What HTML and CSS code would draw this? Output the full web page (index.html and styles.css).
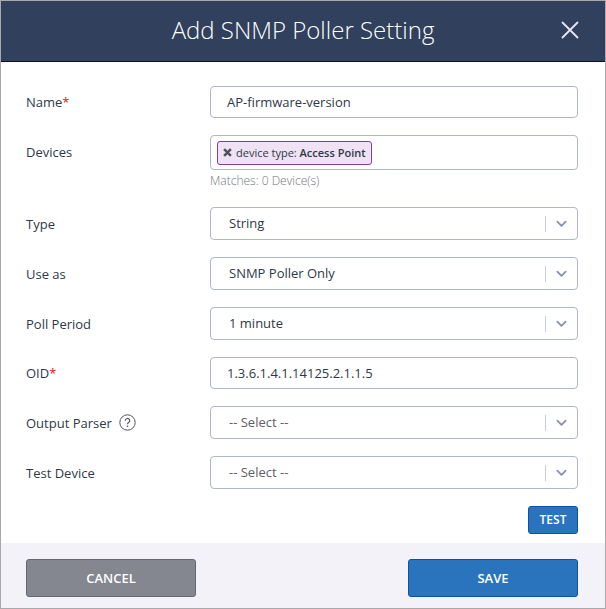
FILE: index.html
```html
<!DOCTYPE html>
<html lang="en">
<head>
<meta charset="utf-8">
<meta name="viewport" content="width=device-width, initial-scale=1">
<title>Add SNMP Poller Setting</title>
<link rel="stylesheet" href="styles.css">
</head>
<body>
<svg class="defs" aria-hidden="true">
  <symbol id="chevron" viewBox="0 0 12 8"><path d="M1.500 1.500 6 6l4.500-4.500" fill="none" stroke="currentColor" stroke-width="2" stroke-linecap="round" stroke-linejoin="round"/></symbol>
</svg>
<form class="dialog" role="dialog" aria-labelledby="dialog-title">
  <header class="header">
    <h1 class="title" id="dialog-title">Add SNMP Poller Setting</h1>
    <button class="close" type="button" aria-label="Close">
      <svg class="close-icon" viewBox="0 0 18 18"><path d="M1.500 1.500l15 15M16.500 1.500l-15 15" fill="none" stroke="currentColor" stroke-width="1.800" stroke-linecap="round"/></svg>
    </button>
  </header>

  <main class="fields">
    <div class="row">
      <label class="label" for="name">Name<span class="required">*</span></label>
      <input class="box input" id="name" type="text" value="AP-firmware-version">
    </div>
    <div class="row row-devices">
      <label class="label" for="devices">Devices</label>
      <div class="stack">
        <div class="box tags">
          <span class="tag">
            <button class="tag-remove" type="button" aria-label="Remove">
              <svg class="tag-icon" viewBox="0 0 8 8"><path d="M1 1l6 6M7 1l-6 6" fill="none" stroke="currentColor" stroke-width="2.200"/></svg>
            </button>
            <span>device type: <b>Access Point</b></span>
          </span>
          <input class="tag-input" id="devices" type="text">
        </div>
        <p class="hint">Matches: 0 Device(s)</p>
      </div>
    </div>
    <div class="row">
      <label class="label" for="type">Type</label>
      <div class="box select-box">
        <select class="select" id="type"><option>String</option></select>
        <svg class="chevron"><use href="#chevron"/></svg>
      </div>
    </div>
    <div class="row">
      <label class="label" for="use-as">Use as</label>
      <div class="box select-box">
        <select class="select" id="use-as"><option>SNMP Poller Only</option></select>
        <svg class="chevron"><use href="#chevron"/></svg>
      </div>
    </div>
    <div class="row">
      <label class="label" for="period">Poll Period</label>
      <div class="box select-box">
        <select class="select" id="period"><option>1 minute</option></select>
        <svg class="chevron"><use href="#chevron"/></svg>
      </div>
    </div>
    <div class="row">
      <label class="label" for="oid">OID<span class="required">*</span></label>
      <input class="box input" id="oid" type="text" value="1.3.6.1.4.1.14125.2.1.1.5">
    </div>
    <div class="row">
      <div class="label-group">
        <label class="label" for="parser">Output Parser</label>
        <button class="help" type="button" aria-label="Help">
          <svg class="help-icon" viewBox="0 0 17 17" fill="none" stroke="currentColor"><circle cx="8.500" cy="8.500" r="7.700"/><path d="M6.300 6.700a2.200 2.200 0 1 1 3.300 1.900c-.8.500-1.100.8-1.100 1.700" stroke-width="1.200"/><path d="M8.500 11.500v1.400" stroke-width="1.400"/></svg>
        </button>
      </div>
      <div class="box select-box">
        <select class="select empty" id="parser"><option>-- Select --</option></select>
        <svg class="chevron"><use href="#chevron"/></svg>
      </div>
    </div>
    <div class="row">
      <label class="label" for="test-device">Test Device</label>
      <div class="box select-box">
        <select class="select empty" id="test-device"><option>-- Select --</option></select>
        <svg class="chevron"><use href="#chevron"/></svg>
      </div>
    </div>
    <button class="button primary test" type="button">TEST</button>
  </main>

  <footer class="footer">
    <button class="button secondary wide" type="button">CANCEL</button>
    <button class="button primary wide" type="submit">SAVE</button>
  </footer>
</form>
</body>
</html>
```
FILE: styles.css
```css
* {
  box-sizing: border-box;
}

body {
  margin: 0;
  background: #fff;
  color: #303848;
  font-family: "Open Sans", sans-serif;
  font-size: 13px;
  line-height: 18px;
}

button,
input,
select {
  margin: 0;
  padding: 0;
  border: 0;
  background: none;
  color: inherit;
  font: inherit;
}

.defs {
  display: none;
}

.dialog {
  display: flex;
  flex-direction: column;
  min-height: 100vh;
  border: 1px solid #a9a9a9;
}

.header {
  display: grid;
  grid-template-columns: 1fr auto 1fr;
  align-items: center;
  height: 61px;
  padding: 0 26px 2px;
  border-bottom: 1px solid #0c0c38;
  background: #31405c;
  color: #fff;
}

.title {
  grid-column: 2;
  margin: 0;
  font-size: 24px;
  font-weight: 300;
  line-height: 32px;
}

.close {
  display: flex;
  justify-self: end;
  color: #e6e6f6;
}

.close-icon {
  width: 18px;
  height: 18px;
}

.fields {
  display: flex;
  flex: 1;
  flex-direction: column;
  gap: 17px;
  padding: 24px 27px 8px 25px;
}

.row {
  display: grid;
  grid-template-columns: 1fr 2fr;
  align-items: center;
}

.row-devices {
  align-items: start;
}

.row-devices > .label {
  padding-top: 8px;
}

.label-group {
  display: flex;
  align-items: center;
  gap: 7px;
}

.required {
  color: #e81010;
}

.help {
  display: flex;
  color: #50545e;
}

.help-icon {
  width: 17px;
  height: 17px;
}

.box {
  width: 100%;
  min-width: 0;
  border: 1px solid #b0b6ce;
  border-radius: 4px;
  background: #fff;
}

.input {
  height: 32px;
  padding: 0 16px;
}

.tags {
  display: flex;
  align-items: center;
  gap: 6px;
  height: 35px;
  padding: 0 6px;
}

.tag {
  display: flex;
  flex: none;
  align-items: center;
  gap: 4px;
  height: 24px;
  padding: 0 5px;
  border: 1px solid #8040a0;
  border-radius: 3px;
  background: #eee2f4;
  font-size: 11px;
}

.tag b {
  font-weight: 600;
}

.tag-remove {
  display: flex;
  color: #505060;
}

.tag-icon {
  width: 9px;
  height: 9px;
}

.tag-input {
  flex: 1;
  min-width: 0;
}

.hint {
  margin: 2px 0 0;
  color: #74767e;
  font-size: 12px;
  font-weight: 300;
}

.select-box {
  display: grid;
  grid-template-columns: 1fr 32px;
  align-items: center;
  height: 33px;
}

.select {
  grid-area: 1 / 1 / 2 / 3;
  width: 100%;
  height: 31px;
  padding: 0 40px 2px 18px;
  appearance: none;
}

.empty {
  color: #5c5e64;
}

.chevron {
  grid-area: 1 / 2;
  width: 32px;
  height: 16px;
  padding: 4px 10px;
  border-left: 1px solid #ccccd4;
  color: #8890b4;
  pointer-events: none;
}

.button {
  border-radius: 3px;
  color: #fff;
  font-weight: 600;
}

.primary {
  border: 1px solid #0c50a8;
  background: #2a74be;
}

.secondary {
  border: 1px solid #646874;
  background: #848690;
}

.test {
  align-self: flex-end;
  width: 50px;
  height: 28px;
  font-size: 12px;
}

.footer {
  display: flex;
  justify-content: space-between;
  gap: 24px;
  padding: 16px 27px 11px 25px;
  background: #f2f2f8;
}

.wide {
  width: 170px;
  height: 38px;
}
```
